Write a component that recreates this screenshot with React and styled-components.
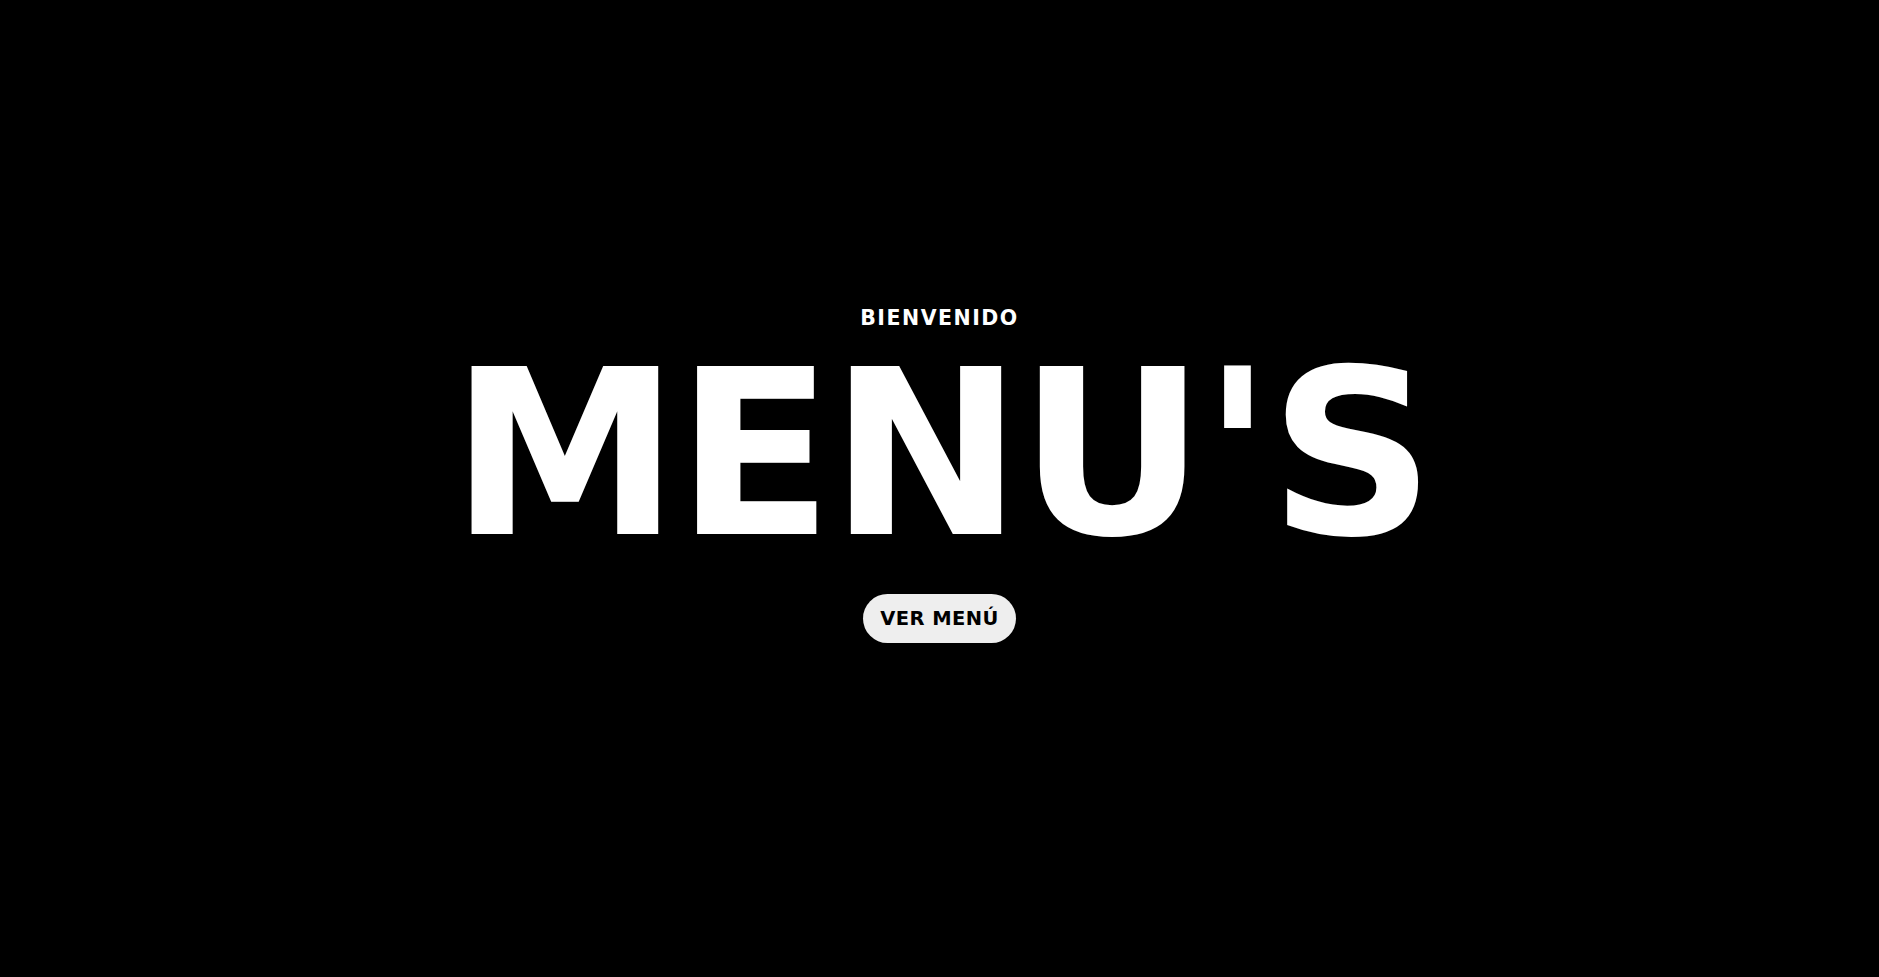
import React from 'react';
import styled, { createGlobalStyle } from 'styled-components';

const GlobalStyle = createGlobalStyle`
	* { box-sizing: border-box; }
	body {
		margin: 0;
		background: #000;
		font-family: "DejaVu Sans", "Liberation Sans", sans-serif;
	}
`;

const Hero = styled.section`
	height: 100vh;
	display: flex;
	flex-direction: column;
	align-items: center;
	justify-content: center;
	color: #fff;
	padding-bottom: 24px;
`;

const Greeting = styled.p`
	margin: 0;
	font-size: 20.5px;
	font-weight: 700;
	line-height: 20px;
	letter-spacing: 1.5px;
	text-transform: uppercase;
	transform: translateY(-2px);
`;

const Title = styled.h1`
	margin: 10px 0 0;
	font-size: 230px;
	font-weight: 700;
	line-height: 230px;
	letter-spacing: -3.4px;
	text-indent: 3px;
	text-transform: uppercase;
`;

const Button = styled.button`
	margin-top: 24px;
	height: 49px;
	padding: 0 17px;
	border: none;
	border-radius: 25px;
	background: #eeeeee;
	color: #000;
	font-family: inherit;
	font-size: 19.5px;
	font-weight: 700;
	letter-spacing: 0.4px;
	text-transform: uppercase;
	cursor: pointer;
`;

function App() {
	return (
		<>
			<GlobalStyle />
			<Hero>
				<Greeting>Bienvenido</Greeting>
				<Title>Menu's</Title>
				<Button>Ver menú</Button>
			</Hero>
		</>
	);
}

export default App;
